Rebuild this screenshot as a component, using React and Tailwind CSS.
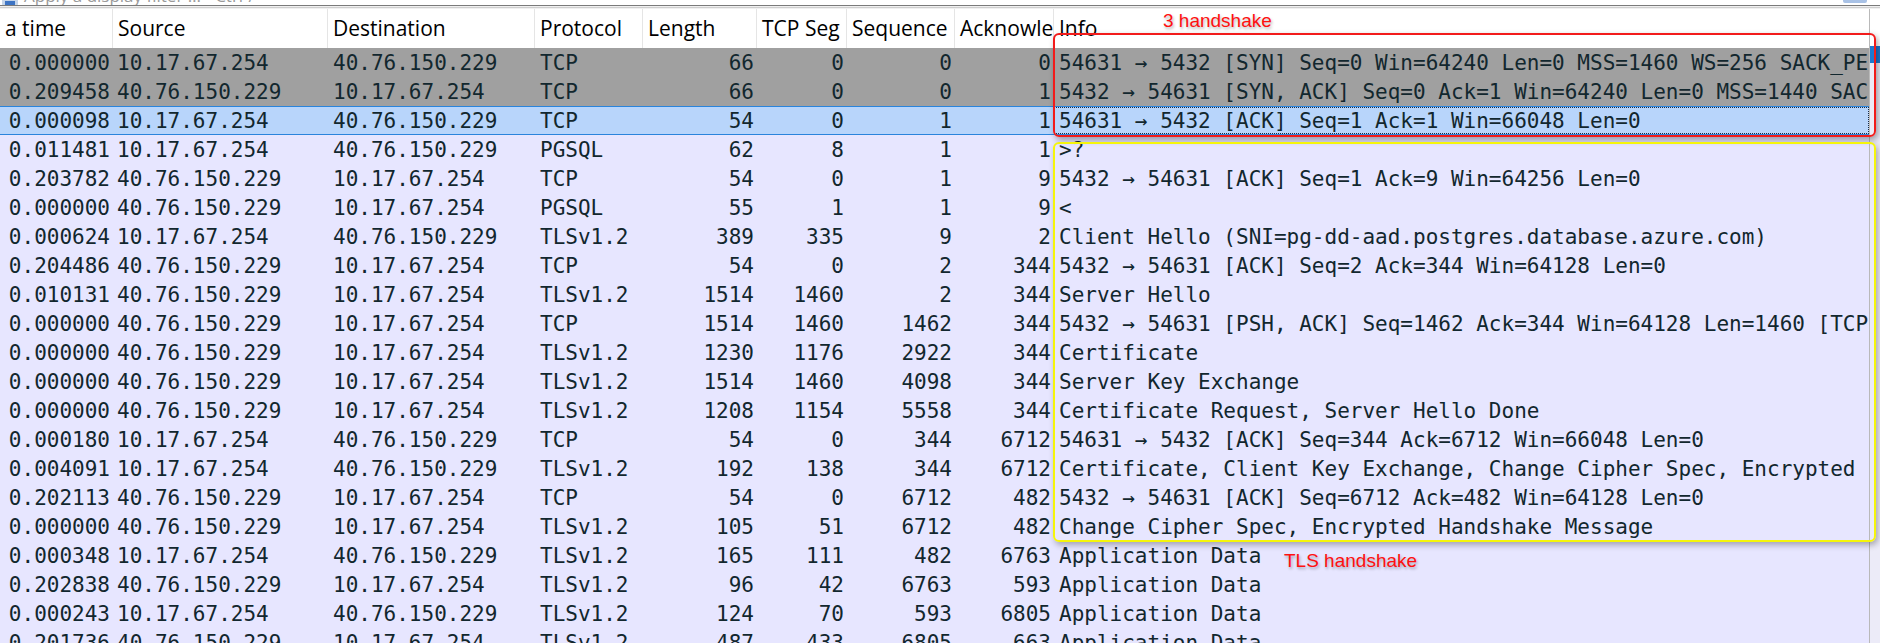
import React from 'react';

const rows = [
  ['0.000000', '10.17.67.254', '40.76.150.229', 'TCP', '66', '0', '0', '0', '54631 → 5432 [SYN] Seq=0 Win=64240 Len=0 MSS=1460 WS=256 SACK_PERM=1', 'gray'],
  ['0.209458', '40.76.150.229', '10.17.67.254', 'TCP', '66', '0', '0', '1', '5432 → 54631 [SYN, ACK] Seq=0 Ack=1 Win=64240 Len=0 MSS=1440 SACK_PERM=1 WS=256', 'gray'],
  ['0.000098', '10.17.67.254', '40.76.150.229', 'TCP', '54', '0', '1', '1', '54631 → 5432 [ACK] Seq=1 Ack=1 Win=66048 Len=0', 'sel'],
  ['0.011481', '10.17.67.254', '40.76.150.229', 'PGSQL', '62', '8', '1', '1', '>?', ''],
  ['0.203782', '40.76.150.229', '10.17.67.254', 'TCP', '54', '0', '1', '9', '5432 → 54631 [ACK] Seq=1 Ack=9 Win=64256 Len=0', ''],
  ['0.000000', '40.76.150.229', '10.17.67.254', 'PGSQL', '55', '1', '1', '9', '<', ''],
  ['0.000624', '10.17.67.254', '40.76.150.229', 'TLSv1.2', '389', '335', '9', '2', 'Client Hello (SNI=pg-dd-aad.postgres.database.azure.com)', ''],
  ['0.204486', '40.76.150.229', '10.17.67.254', 'TCP', '54', '0', '2', '344', '5432 → 54631 [ACK] Seq=2 Ack=344 Win=64128 Len=0', ''],
  ['0.010131', '40.76.150.229', '10.17.67.254', 'TLSv1.2', '1514', '1460', '2', '344', 'Server Hello', ''],
  ['0.000000', '40.76.150.229', '10.17.67.254', 'TCP', '1514', '1460', '1462', '344', '5432 → 54631 [PSH, ACK] Seq=1462 Ack=344 Win=64128 Len=1460 [TCP segment of a reassembled PDU]', ''],
  ['0.000000', '40.76.150.229', '10.17.67.254', 'TLSv1.2', '1230', '1176', '2922', '344', 'Certificate', ''],
  ['0.000000', '40.76.150.229', '10.17.67.254', 'TLSv1.2', '1514', '1460', '4098', '344', 'Server Key Exchange', ''],
  ['0.000000', '40.76.150.229', '10.17.67.254', 'TLSv1.2', '1208', '1154', '5558', '344', 'Certificate Request, Server Hello Done', ''],
  ['0.000180', '10.17.67.254', '40.76.150.229', 'TCP', '54', '0', '344', '6712', '54631 → 5432 [ACK] Seq=344 Ack=6712 Win=66048 Len=0', ''],
  ['0.004091', '10.17.67.254', '40.76.150.229', 'TLSv1.2', '192', '138', '344', '6712', 'Certificate, Client Key Exchange, Change Cipher Spec, Encrypted Handshake Message', ''],
  ['0.202113', '40.76.150.229', '10.17.67.254', 'TCP', '54', '0', '6712', '482', '5432 → 54631 [ACK] Seq=6712 Ack=482 Win=64128 Len=0', ''],
  ['0.000000', '40.76.150.229', '10.17.67.254', 'TLSv1.2', '105', '51', '6712', '482', 'Change Cipher Spec, Encrypted Handshake Message', ''],
  ['0.000348', '10.17.67.254', '40.76.150.229', 'TLSv1.2', '165', '111', '482', '6763', 'Application Data', ''],
  ['0.202838', '40.76.150.229', '10.17.67.254', 'TLSv1.2', '96', '42', '6763', '593', 'Application Data', ''],
  ['0.000243', '10.17.67.254', '40.76.150.229', 'TLSv1.2', '124', '70', '593', '6805', 'Application Data', ''],
  ['0.201736', '40.76.150.229', '10.17.67.254', 'TLSv1.2', '487', '433', '6805', '663', 'Application Data', ''],
];

function Row({ r }) {
  const kind = r[9];
  const bg =
    kind === 'gray'
      ? 'bg-[#a0a0a0]'
      : kind === 'sel'
      ? 'bg-[#b8d5fb] border-y border-[#2a84dc]'
      : 'bg-[#e7e6ff]';
  return (
    <div className={`flex h-[29px] shrink-0 items-center pt-[2px] leading-[27px] text-[#12272e] ${bg}`}>
      <div className="w-[113px] shrink-0 overflow-hidden whitespace-pre pr-[3px] text-right">{r[0]}</div>
      <div className="w-[215px] shrink-0 overflow-hidden whitespace-pre pl-[4px]">{r[1]}</div>
      <div className="w-[207px] shrink-0 overflow-hidden whitespace-pre pl-[5px]">{r[2]}</div>
      <div className="w-[108px] shrink-0 overflow-hidden whitespace-pre pl-[5px]">{r[3]}</div>
      <div className="w-[114px] shrink-0 overflow-hidden whitespace-pre pr-[3px] text-right">{r[4]}</div>
      <div className="w-[90px] shrink-0 overflow-hidden whitespace-pre pr-[3px] text-right">{r[5]}</div>
      <div className="w-[108px] shrink-0 overflow-hidden whitespace-pre pr-[3px] text-right">{r[6]}</div>
      <div className="w-[99px] shrink-0 overflow-hidden whitespace-pre pr-[3px] text-right">{r[7]}</div>
      {kind === 'sel' ? (
        <div className="mt-[-2px] h-[27px] min-w-0 flex-1 overflow-hidden whitespace-pre border border-dotted border-[#1a2a40] pl-[4px] pt-[1px] leading-[25px]">
          {r[8]}
        </div>
      ) : (
        <div className="min-w-0 flex-1 overflow-hidden whitespace-pre pl-[5px]">{r[8]}</div>
      )}
    </div>
  );
}

function HeaderCell({ children, className }) {
  return (
    <div className={`shrink-0 overflow-hidden whitespace-pre border-r border-[#e5e5e5] pl-[5px] ${className}`}>
      {children}
    </div>
  );
}

export default function App() {
  return (
    <div className="relative h-[643px] w-[1880px] overflow-hidden bg-[#e7e6ff]">
      {/* display filter strip (mostly scrolled out of view) */}
      <div className="flex h-[9px] flex-col bg-[#f0f0f0]">
        <div className="relative flex h-[6px] items-end overflow-hidden border-b border-[#7a7a7a] bg-white">
          <div className="ml-[2px] mb-[-1px] flex h-[20px] w-[16px] shrink-0 items-end justify-center rounded-[2px] bg-[#c5d5ea]">
            <div className="mb-[1px] h-[4px] w-[10px] bg-[#3d74c4]" />
          </div>
          <div className="ml-[6px] mb-[-1px] whitespace-pre font-['Open_Sans',sans-serif] text-[17px] leading-[20px] text-[#9a9a9a]">
            Apply a display filter … &lt;Ctrl-/&gt;
          </div>
          <div className="ml-auto mr-[13px] mb-[2px] h-[20px] w-[24px] rounded-[2px] bg-[#a9c2e6]" />
        </div>
        <div className="h-[1px] bg-[#f0f0f0]" />
        <div className="h-[1px] bg-[#cfcfcf]" />
      </div>

      <div className="flex">
        <div className="w-[1869px] shrink-0">
          {/* header */}
          <div className="flex h-[39px] items-center bg-white font-['Open_Sans',sans-serif] text-[21px] leading-[39px] text-black">
            <HeaderCell className="w-[113px] pl-0">a time</HeaderCell>
            <HeaderCell className="w-[215px]">Source</HeaderCell>
            <HeaderCell className="w-[207px]">Destination</HeaderCell>
            <HeaderCell className="w-[108px]">Protocol</HeaderCell>
            <HeaderCell className="w-[114px]">Length</HeaderCell>
            <HeaderCell className="w-[90px]">TCP Seg</HeaderCell>
            <HeaderCell className="w-[108px]">Sequence</HeaderCell>
            <HeaderCell className="w-[99px]">Acknowledgment</HeaderCell>
            <div className="min-w-0 flex-1 overflow-hidden whitespace-pre pl-[5px]">Info</div>
          </div>
          {/* packet rows */}
          <div className="flex flex-col font-['DejaVu_Sans_Mono',monospace] text-[21px]">
            {rows.map((r, i) => (
              <Row key={i} r={r} />
            ))}
          </div>
        </div>
        {/* vertical scrollbar */}
        <div className="flex w-[11px] shrink-0 flex-col border-l border-[#b9b9b9] bg-[#ecebf8]">
          <div className="h-[37px] bg-white" />
          <div className="h-[17px] bg-[#1e78d0]" />
        </div>
      </div>

      {/* annotations */}
      <div className="absolute left-[1053px] top-[33px] h-[104px] w-[823px] rounded-[6px] border-2 border-[#f21b1b] shadow-[2px_3px_6px_rgba(0,0,0,0.35)]" />
      <div className="absolute left-[1163px] top-[9px] whitespace-pre font-['Liberation_Sans',sans-serif] text-[19px] leading-[24px] text-[#ff1010] [text-shadow:1px_2px_3px_rgba(0,0,0,0.3)]">
        3 handshake
      </div>
      <div className="absolute left-[1053px] top-[142px] h-[400px] w-[823px] rounded-[6px] border-2 border-[#f5f50a] shadow-[2px_3px_6px_rgba(0,0,0,0.3)]" />
      <div className="absolute left-[1284px] top-[549px] whitespace-pre font-['Liberation_Sans',sans-serif] text-[19px] leading-[24px] text-[#ff1010] [text-shadow:1px_2px_3px_rgba(0,0,0,0.3)]">
        TLS handshake
      </div>
    </div>
  );
}
